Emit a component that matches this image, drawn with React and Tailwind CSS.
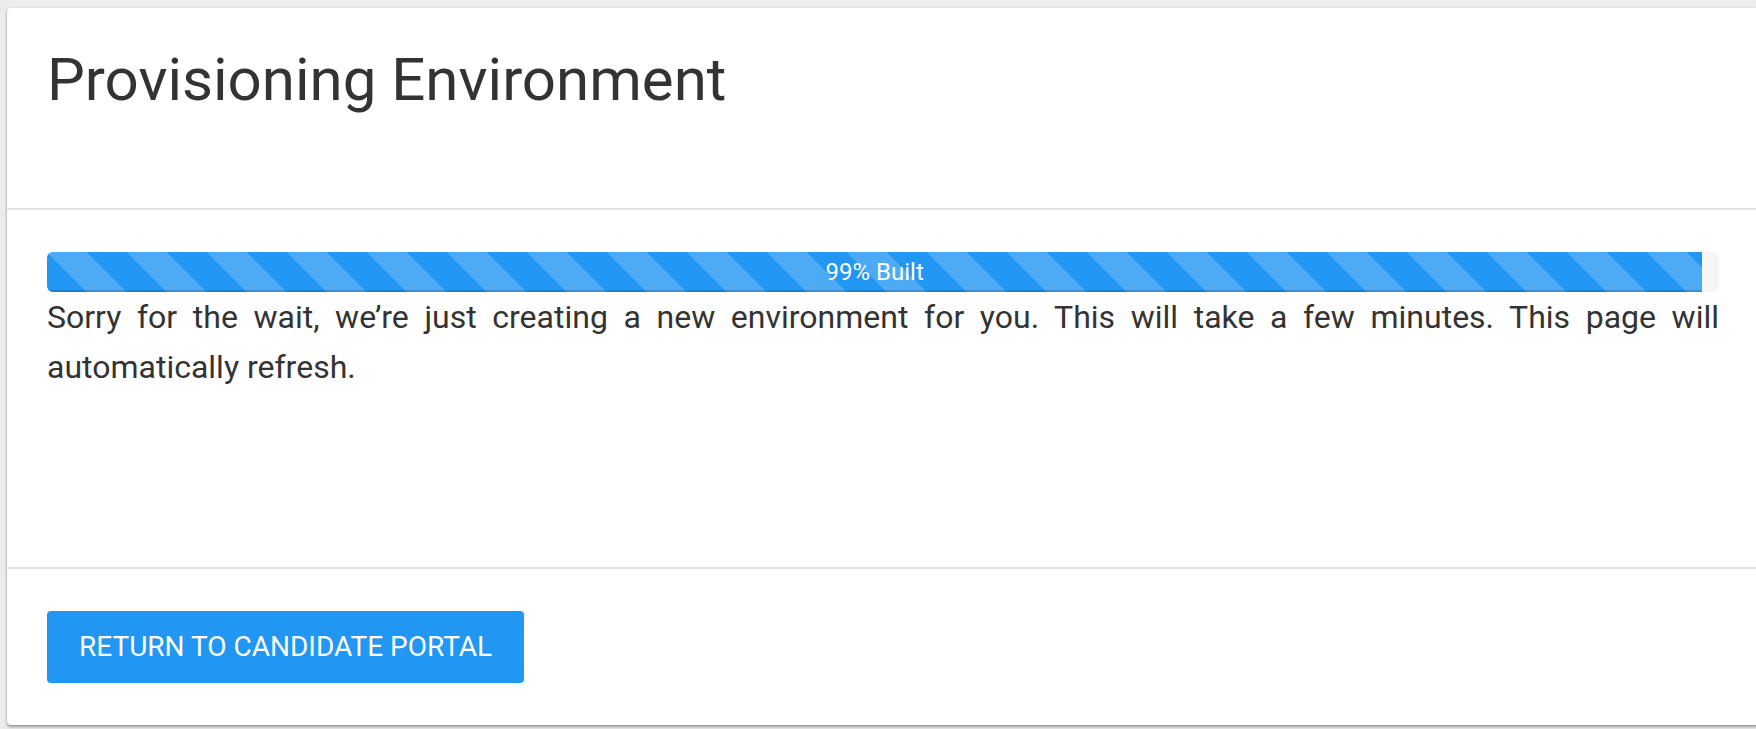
import React from 'react';

const ProgressBar = ({ percent, label }) => {
    return (
        <div className="w-full h-[40px] rounded-[6px] bg-[#f5f5f5] overflow-hidden">
            <div
                className="h-full flex items-center justify-center bg-[#2196f3] bg-[linear-gradient(45deg,rgba(255,255,255,.2)_25%,transparent_25%,transparent_50%,rgba(255,255,255,.2)_50%,rgba(255,255,255,.2)_75%,transparent_75%,transparent)] bg-[length:80px_80px] shadow-[inset_0_-2px_0_rgba(0,0,0,0.15)] text-white text-[24px] leading-none"
                style={{ width: `${percent}%` }}
            >
                {label}
            </div>
        </div>
    );
};

export default function App() {
    return (
        <div className="w-full h-screen overflow-hidden bg-[#ececec] pt-[8px] pl-[7px] font-['Roboto','Liberation_Sans',sans-serif]">
            <div className="w-[1752px] bg-white rounded-[4px] shadow-[0_2px_3px_rgba(0,0,0,0.35),0_0_2px_rgba(0,0,0,0.12)]">
                <div className="h-[202px] px-[40px] pt-[36px] border-b-2 border-[#e4e4e4]">
                    <h1 className="text-[60px] leading-[72px] font-normal text-[#333333]">
                        Provisioning Environment
                    </h1>
                </div>

                <div className="h-[359px] px-[40px] pt-[42px] border-b-2 border-[#e4e4e4]">
                    <ProgressBar percent={99} label="99% Built" />
                    <p className="text-[32px] leading-[50px] text-[#333333] text-justify">
                        Sorry for the wait, we’re just creating a new environment for you. This will take a few minutes. This page will automatically refresh.
                    </p>
                </div>

                <div className="h-[156px] px-[40px] pt-[42px]">
                    <button className="h-[72px] px-[32px] rounded-[4px] bg-[#2196f3] text-white text-[28px] leading-none uppercase">
                        Return to Candidate Portal
                    </button>
                </div>
            </div>
        </div>
    );
}
